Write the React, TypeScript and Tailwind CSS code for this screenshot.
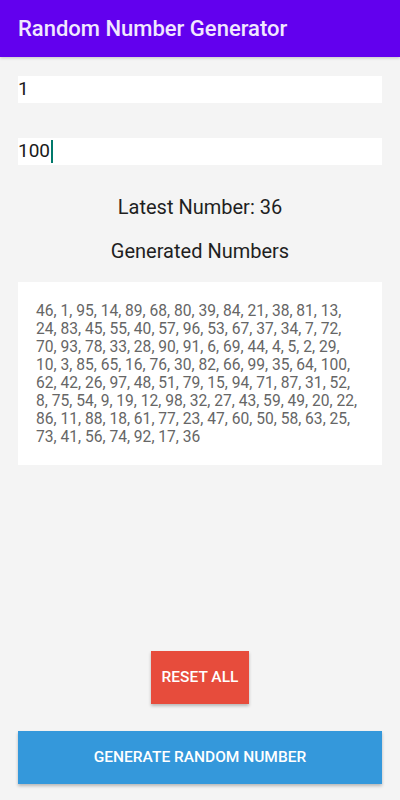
import { useState } from 'react';

const initialNumbers = [
  46, 1, 95, 14, 89, 68, 80, 39, 84, 21, 38, 81, 13, 24, 83, 45, 55, 40, 57, 96, 53, 67, 37, 34, 7, 72,
  70, 93, 78, 33, 28, 90, 91, 6, 69, 44, 4, 5, 2, 29, 10, 3, 85, 65, 16, 76, 30, 82, 66, 99, 35, 64, 100,
  62, 42, 26, 97, 48, 51, 79, 15, 94, 71, 87, 31, 52, 8, 75, 54, 9, 19, 12, 98, 32, 27, 43, 59, 49, 20, 22,
  86, 11, 88, 18, 61, 77, 23, 47, 60, 50, 58, 63, 25, 73, 41, 56, 74, 92, 17, 36,
];

const App = () => {
  const [min] = useState('1');
  const [max] = useState('100');
  const [numbers, setNumbers] = useState<number[]>(initialNumbers);

  const latest = numbers.length > 0 ? numbers[numbers.length - 1] : '';

  const generate = () => {
    const lo = parseInt(min, 10);
    const hi = parseInt(max, 10);
    const left = [];
    for (let i = lo; i <= hi; i++) if (!numbers.includes(i)) left.push(i);
    if (left.length === 0) return;
    setNumbers([...numbers, left[Math.floor(Math.random() * left.length)]]);
  };

  return (
    <div className="min-h-[800px] flex flex-col bg-[#f4f4f4] font-['Roboto','Liberation_Sans',sans-serif]">
      {/* App bar */}
      <div className="h-[57px] bg-[#6200ee] flex items-center px-[18px] shadow-[0_1px_3px_rgba(0,0,0,0.2)]">
        <h1 className="text-[22px] font-medium text-[#f1e8fe] leading-none">Random Number Generator</h1>
      </div>

      <div className="flex-1 flex flex-col px-[18px] pb-[16px]">
        {/* Min / max fields */}
        <div className="mt-[19px] h-[27px] bg-white flex items-center text-[19px] text-[#1a1a1a]">{min}</div>
        <div className="mt-[35px] h-[27px] bg-white flex items-center text-[19px] text-[#1a1a1a]">
          {max}
          <span className="ml-[1px] w-[2px] h-[23px] bg-[#00796b]" />
        </div>

        <p className="mt-[30px] text-center text-[20px] leading-[24px] text-[#1f1f1f]">Latest Number: {latest}</p>
        <p className="mt-[20px] text-center text-[20px] leading-[24px] text-[#1f1f1f]">Generated Numbers</p>

        {/* Numbers list */}
        <div className="mt-[19px] h-[183px] bg-white pt-[20px] px-[18px]">
          <p className="text-[15.6px] leading-[18px] text-[#666666]">{numbers.join(', ')}</p>
        </div>

        <div className="flex-1" />

        <div className="flex justify-center">
          <button
            onClick={() => setNumbers([])}
            className="w-[98px] h-[53px] bg-[#e74c3c] text-white text-[15.5px] font-medium shadow-[0_2px_3px_rgba(0,0,0,0.25)]"
          >
            RESET ALL
          </button>
        </div>

        <button
          onClick={generate}
          className="mt-[27px] h-[53px] w-full bg-[#3498db] text-white text-[15.5px] font-medium shadow-[0_2px_3px_rgba(0,0,0,0.25)]"
        >
          GENERATE RANDOM NUMBER
        </button>
      </div>
    </div>
  );
};

export default App;
